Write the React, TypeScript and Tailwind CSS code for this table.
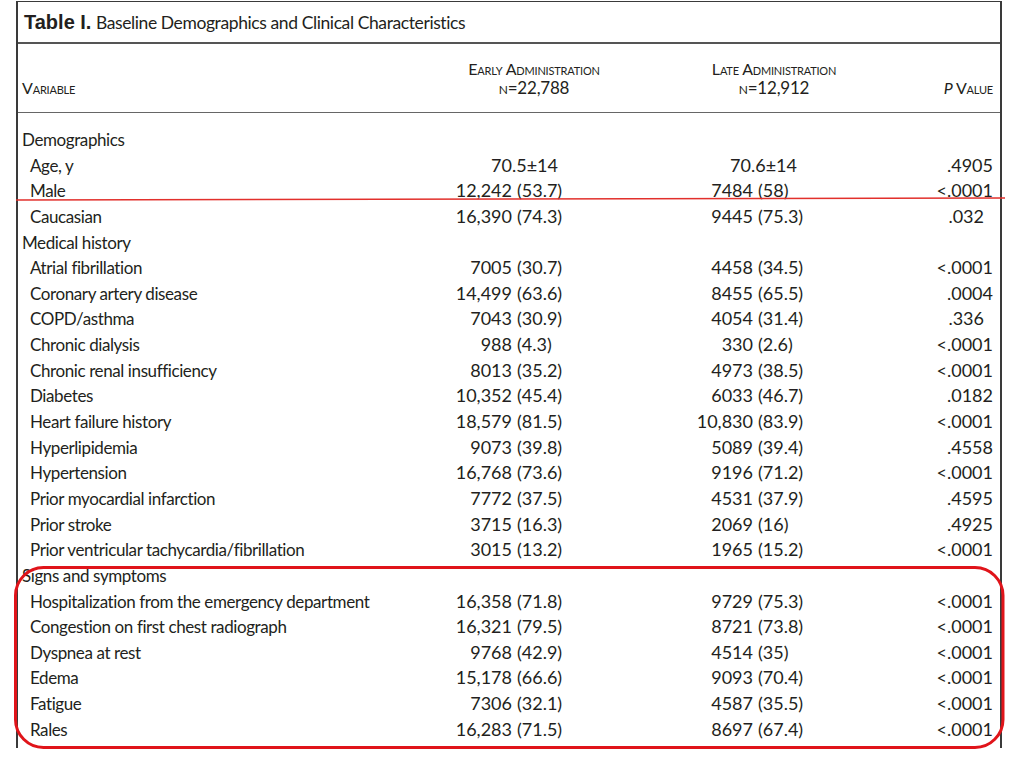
type Row = { label: string; early: string; late: string; p: string };
type Section = { title: string; rows: Row[] };

const sections: Section[] = [
  {
    title: "Demographics",
    rows: [
      { label: "Age, y", early: "70.5±14", late: "70.6±14", p: ".4905" },
      { label: "Male", early: "12,242 (53.7)", late: "7484 (58)", p: "<.0001" },
      { label: "Caucasian", early: "16,390 (74.3)", late: "9445 (75.3)", p: ".032" },
    ],
  },
  {
    title: "Medical history",
    rows: [
      { label: "Atrial fibrillation", early: "7005 (30.7)", late: "4458 (34.5)", p: "<.0001" },
      { label: "Coronary artery disease", early: "14,499 (63.6)", late: "8455 (65.5)", p: ".0004" },
      { label: "COPD/asthma", early: "7043 (30.9)", late: "4054 (31.4)", p: ".336" },
      { label: "Chronic dialysis", early: "988 (4.3)", late: "330 (2.6)", p: "<.0001" },
      { label: "Chronic renal insufficiency", early: "8013 (35.2)", late: "4973 (38.5)", p: "<.0001" },
      { label: "Diabetes", early: "10,352 (45.4)", late: "6033 (46.7)", p: ".0182" },
      { label: "Heart failure history", early: "18,579 (81.5)", late: "10,830 (83.9)", p: "<.0001" },
      { label: "Hyperlipidemia", early: "9073 (39.8)", late: "5089 (39.4)", p: ".4558" },
      { label: "Hypertension", early: "16,768 (73.6)", late: "9196 (71.2)", p: "<.0001" },
      { label: "Prior myocardial infarction", early: "7772 (37.5)", late: "4531 (37.9)", p: ".4595" },
      { label: "Prior stroke", early: "3715 (16.3)", late: "2069 (16)", p: ".4925" },
      { label: "Prior ventricular tachycardia/fibrillation", early: "3015 (13.2)", late: "1965 (15.2)", p: "<.0001" },
    ],
  },
  {
    title: "Signs and symptoms",
    rows: [
      { label: "Hospitalization from the emergency department", early: "16,358 (71.8)", late: "9729 (75.3)", p: "<.0001" },
      { label: "Congestion on first chest radiograph", early: "16,321 (79.5)", late: "8721 (73.8)", p: "<.0001" },
      { label: "Dyspnea at rest", early: "9768 (42.9)", late: "4514 (35)", p: "<.0001" },
      { label: "Edema", early: "15,178 (66.6)", late: "9093 (70.4)", p: "<.0001" },
      { label: "Fatigue", early: "7306 (32.1)", late: "4587 (35.5)", p: "<.0001" },
      { label: "Rales", early: "16,283 (71.5)", late: "8697 (67.4)", p: "<.0001" },
    ],
  },
];

// splits "12,242 (53.7)" into the count and the percentage
function split(v: string) {
  const i = v.indexOf(" ");
  return i < 0 ? [v, ""] : [v.slice(0, i), v.slice(i + 1)];
}

function DataRow({ row }: { row: Row }) {
  const [en, ep] = split(row.early);
  const [ln, lp] = split(row.late);
  const short = row.p.replace("<", "").length === 4;
  return (
    <div className="flex h-[25.65px] leading-[25.65px] whitespace-nowrap">
      <div className="w-[394px] pl-[12px] text-[17px] tracking-[-0.4px]">{row.label}</div>
      {ep ? (
        <>
          <div className="w-[100px] text-right">{en}</div>
          <div className="w-[120px] pl-[5px]">{ep}</div>
        </>
      ) : (
        <div className="w-[220px] pr-[74px] text-right">{en}</div>
      )}
      {lp ? (
        <>
          <div className="w-[121px] text-right">{ln}</div>
          <div className="w-[147px] pl-[5px]">{lp}</div>
        </>
      ) : (
        <div className="w-[268px] pr-[103px] text-right">{ln}</div>
      )}
      <div className={short ? "w-[93px] pr-[9px] text-right" : "w-[93px] text-right"}>{row.p}</div>
    </div>
  );
}

export default function App() {
  return (
    <div className="relative w-[1024px] h-[768px] bg-white overflow-hidden font-['Lato',sans-serif] text-[#231f20]">
      <div className="ml-[16px] mt-[1px] w-[986px] h-[747px] border-t border-x-2 border-[#3a3a3a] overflow-hidden">
        <div className="h-[42px] pl-[6px] pt-[10px] border-b-2 border-[#555] text-[17.5px] leading-[20px] whitespace-nowrap">
          <span className="font-['Liberation_Sans',sans-serif] font-bold text-[20px]">Table I.</span>{" "}
          <span className="tracking-[-0.4px]">Baseline Demographics and Clinical Characteristics</span>
        </div>

        <div className="h-[69px] flex items-end pb-[15px] border-b border-[#666] text-[16px] leading-[19px] tracking-[-0.2px] [font-variant:small-caps] whitespace-nowrap">
          <div className="w-[426px] pl-[4px]">Variable</div>
          <div className="w-[180px] text-center">
            <div>Early Administration</div>
            <div className="text-[17px]">n=22,788</div>
          </div>
          <div className="w-[60px]" />
          <div className="w-[180px] text-center">
            <div>Late Administration</div>
            <div className="text-[17px]">n=12,912</div>
          </div>
          <div className="w-[129px] text-right">
            <span className="italic">P</span> Value
          </div>
        </div>

        <div className="pt-[14px] text-[18px]">
          {sections.map((s) => (
            <div key={s.title}>
              <div className="h-[25.65px] leading-[25.65px] pl-[4px] text-[17px] tracking-[-0.4px] whitespace-nowrap">{s.title}</div>
              {s.rows.map((r) => (
                <DataRow key={r.label} row={r} />
              ))}
            </div>
          ))}
        </div>
      </div>

      {/* red pen marks drawn over the scan */}
      <svg className="absolute left-0 top-0 pointer-events-none" width="1024" height="768" viewBox="0 0 1024 768">
        <line x1="16" y1="200" x2="1005" y2="198" stroke="#e2302c" strokeWidth="1.5" />
        <rect x="15.5" y="567.5" width="987.5" height="180" rx="28" fill="none" stroke="#e0141a" strokeWidth="3" />
      </svg>
    </div>
  );
}
